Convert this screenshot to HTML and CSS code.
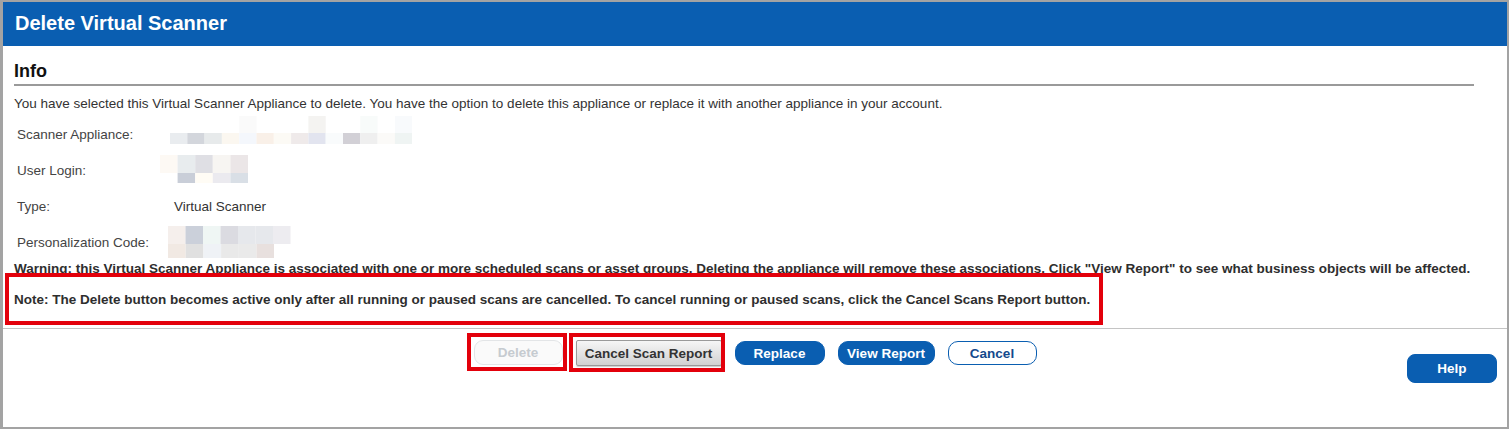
FILE: index.html
```html
<!DOCTYPE html>
<html>
<head>
<meta charset="utf-8">
<link rel="stylesheet" href="styles.css">
</head>
<body>
<div class="frame">
  <div class="titlebar">Delete Virtual Scanner</div>
  <div class="content">
    <h2 class="section-title">Info</h2>
    <p class="intro">You have selected this Virtual Scanner Appliance to delete. You have the option to delete this appliance or replace it with another appliance in your account.</p>
    <div class="details">
      <div class="row">
        <div class="label">Scanner Appliance:</div>
        <div class="value">
          <svg class="blur" width="260" height="36" viewBox="0 0 260 36">
            <rect x="79.2" y="0" width="17.3" height="17" fill="#fafafa"/>
            <rect x="148.4" y="0" width="17.3" height="17" fill="#f4f3f1"/>
            <rect x="200.3" y="0" width="17.3" height="17" fill="#f8fbfa"/>
            <rect x="234.9" y="0" width="17.1" height="17" fill="#f8fafc"/>
            <rect x="10" y="17" width="17.3" height="11" fill="#e9ecef"/>
            <rect x="27.3" y="17" width="17.3" height="11" fill="#d3d6dc"/>
            <rect x="44.6" y="17" width="17.3" height="11" fill="#e7eaeb"/>
            <rect x="61.9" y="17" width="17.3" height="11" fill="#fbf7f0"/>
            <rect x="79.2" y="17" width="17.3" height="11" fill="#f4f7fc"/>
            <rect x="96.5" y="17" width="17.3" height="11" fill="#f9f0e8"/>
            <rect x="113.8" y="17" width="17.3" height="11" fill="#fcfaf5"/>
            <rect x="131.1" y="17" width="17.3" height="11" fill="#efeaea"/>
            <rect x="148.4" y="17" width="17.3" height="11" fill="#e2e4ef"/>
            <rect x="165.7" y="17" width="17.3" height="11" fill="#f9fbfc"/>
            <rect x="183" y="17" width="17.3" height="11" fill="#d2d0d6"/>
            <rect x="200.3" y="17" width="17.3" height="11" fill="#efefef"/>
            <rect x="217.6" y="17" width="17.3" height="11" fill="#fbfaf8"/>
            <rect x="234.9" y="17" width="17.1" height="11" fill="#eff4f3"/>
          </svg>
        </div>
      </div>
      <div class="row">
        <div class="label">User Login:</div>
        <div class="value">
          <svg class="blur" width="260" height="36" viewBox="0 0 260 36">
            <rect x="0" y="3" width="17.6" height="18" fill="#fdf9f4"/>
            <rect x="17.6" y="3" width="17.6" height="18" fill="#e8ecee"/>
            <rect x="35.2" y="3" width="17.6" height="18" fill="#dfdfe4"/>
            <rect x="52.8" y="3" width="17.6" height="18" fill="#f7f5f2"/>
            <rect x="70.4" y="3" width="17.6" height="18" fill="#ebe6e7"/>
            <rect x="17.6" y="21" width="17.6" height="10" fill="#c9ced8"/>
            <rect x="35.2" y="21" width="17.6" height="10" fill="#fffcf5"/>
            <rect x="52.8" y="21" width="17.6" height="10" fill="#ebeaef"/>
            <rect x="70.4" y="21" width="17.6" height="10" fill="#d9dfe6"/>
          </svg>
        </div>
      </div>
      <div class="row">
        <div class="label">Type:</div>
        <div class="value text">Virtual Scanner</div>
      </div>
      <div class="row">
        <div class="label">Personalization Code:</div>
        <div class="value">
          <svg class="blur" width="260" height="36" viewBox="0 0 260 36">
            <rect x="8" y="2" width="17.5" height="18" fill="#f5efec"/>
            <rect x="25.5" y="2" width="17.5" height="18" fill="#cbd0da"/>
            <rect x="43" y="2" width="17.5" height="18" fill="#eff6f4"/>
            <rect x="60.5" y="2" width="17.5" height="18" fill="#dbdbe1"/>
            <rect x="78" y="2" width="17.5" height="18" fill="#e6e8ec"/>
            <rect x="95.5" y="2" width="17.5" height="18" fill="#e6e8ec"/>
            <rect x="113" y="2" width="17.5" height="18" fill="#edecf0"/>
            <rect x="8" y="20" width="17.7" height="14" fill="#f1e9e3"/>
            <rect x="25.7" y="20" width="17.7" height="14" fill="#e0e0e0"/>
            <rect x="43.4" y="20" width="17.7" height="14" fill="#eff2f6"/>
            <rect x="61.1" y="20" width="17.7" height="14" fill="#e9e9e9"/>
            <rect x="78.8" y="20" width="17.7" height="14" fill="#eaeaea"/>
            <rect x="96.5" y="20" width="17.5" height="14" fill="#e8e0de"/>
          </svg>
        </div>
      </div>
    </div>
    <p class="warning">Warning: this Virtual Scanner Appliance is associated with one or more scheduled scans or asset groups. Deleting the appliance will remove these associations. Click "View Report" to see what business objects will be affected.</p>
    <p class="note">Note: The Delete button becomes active only after all running or paused scans are cancelled. To cancel running or paused scans, click the Cancel Scans Report button.</p>
  </div>
  <div class="footer">
    <div class="spacer"></div>
    <div class="actions">
      <button class="btn btn-disabled w-delete" disabled>Delete</button>
      <button class="btn btn-gray w-csr">Cancel Scan Report</button>
      <button class="btn btn-blue w-replace">Replace</button>
      <button class="btn btn-blue w-view">View Report</button>
      <button class="btn btn-outline w-cancel">Cancel</button>
    </div>
    <div class="help-cell">
      <button class="btn btn-blue btn-help">Help</button>
    </div>
  </div>
  <div class="mark mark-note"></div>
  <div class="mark mark-delete"></div>
  <div class="mark mark-csr"></div>
</div>
</body>
</html>
```

FILE: styles.css
```css
html, body {
  margin: 0;
  padding: 0;
  background: #ffffff;
}

body {
  font-family: "Liberation Sans", Arial, sans-serif;
  color: #333333;
  font-size: 13.5px;
}

.frame {
  position: relative;
  box-sizing: border-box;
  width: 1509px;
  height: 429px;
  border-top: 2px solid #a3a3a3;
  border-right: 2px solid #a3a3a3;
  border-bottom: 2px solid #a3a3a3;
  border-left: 3px solid #a3a3a3;
  background: #ffffff;
}

.titlebar {
  height: 44px;
  box-sizing: border-box;
  background: #0a5eb1;
  color: #ffffff;
  font-weight: bold;
  font-size: 20px;
  line-height: 22px;
  padding: 10px 0 0 12px;
}

.content {
  padding: 15px 33px 0 11px;
}

.section-title {
  margin: 0;
  font-size: 18px;
  line-height: 20px;
  font-weight: bold;
  color: #111111;
  padding-bottom: 3px;
  border-bottom: 2px solid #9a9a9a;
}

.intro {
  margin: 10px 0 0 0;
  line-height: 16px;
  color: #333333;
}

.details {
  margin-top: 4px;
}

.row {
  display: flex;
  align-items: center;
  height: 36px;
}

.label {
  width: 143px;
  padding-left: 3px;
  color: #444444;
}

.value {
  height: 36px;
  display: flex;
  align-items: center;
}

.value.text {
  padding-left: 14px;
  color: #333333;
}

.blur {
  display: block;
}

.warning {
  margin: 1px 0 0 0;
  font-weight: bold;
  line-height: 16px;
  color: #2e2e2e;
  white-space: nowrap;
}

.note {
  margin: 15px 0 0 0;
  font-weight: bold;
  line-height: 16px;
  color: #2e2e2e;
  padding-bottom: 20px;
  margin-right: -33px;
  margin-left: -11px;
  padding-left: 11px;
  border-bottom: 1px solid #c4c4c4;
}

.footer {
  display: grid;
  grid-template-columns: 1fr auto 1fr;
  padding-top: 11px;
}

.actions {
  display: flex;
  align-items: flex-start;
  gap: 13px;
}

.help-cell {
  display: flex;
  justify-content: flex-end;
  padding-right: 10px;
  padding-top: 14px;
}

.btn {
  font-family: "Liberation Sans", Arial, sans-serif;
  font-weight: bold;
  font-size: 13.5px;
  box-sizing: border-box;
  padding: 0;
  margin: 0;
  cursor: pointer;
}

.btn-disabled {
  height: 25px;
  background: #fafafa;
  border: 1px solid #e3e5e7;
  border-radius: 9px;
  color: #c6cbd0;
}

.btn-gray {
  height: 26px;
  background: linear-gradient(#f6f6f6, #d2d2d2);
  border: 1px solid #9a9a9a;
  border-radius: 2px;
  color: #333333;
  box-shadow: 0 1px 1px rgba(0, 0, 0, 0.2);
}

.btn-blue {
  height: 24px;
  margin-top: 1px;
  background: #0a5eb1;
  border: 1px solid #0a5eb1;
  border-radius: 10px;
  color: #ffffff;
}

.btn-outline {
  height: 24px;
  margin-top: 1px;
  background: #ffffff;
  border: 1px solid #0a5eb1;
  border-radius: 10px;
  color: #14498c;
}

.btn-help {
  width: 90px;
  height: 29px;
  margin-top: 0;
  border-radius: 8px;
}

.w-delete { width: 89px; }
.w-csr { width: 146px; }
.w-replace { width: 90px; }
.w-view { width: 97px; }
.w-cancel { width: 89px; }

.mark {
  position: absolute;
  box-sizing: border-box;
  border: 4px solid #e3000b;
  pointer-events: none;
}

.mark-note {
  left: 2px;
  top: 271px;
  width: 1098px;
  height: 52px;
}

.mark-delete {
  left: 464px;
  top: 331px;
  width: 100px;
  height: 38px;
}

.mark-csr {
  left: 566px;
  top: 331px;
  width: 156px;
  height: 39px;
}
```
